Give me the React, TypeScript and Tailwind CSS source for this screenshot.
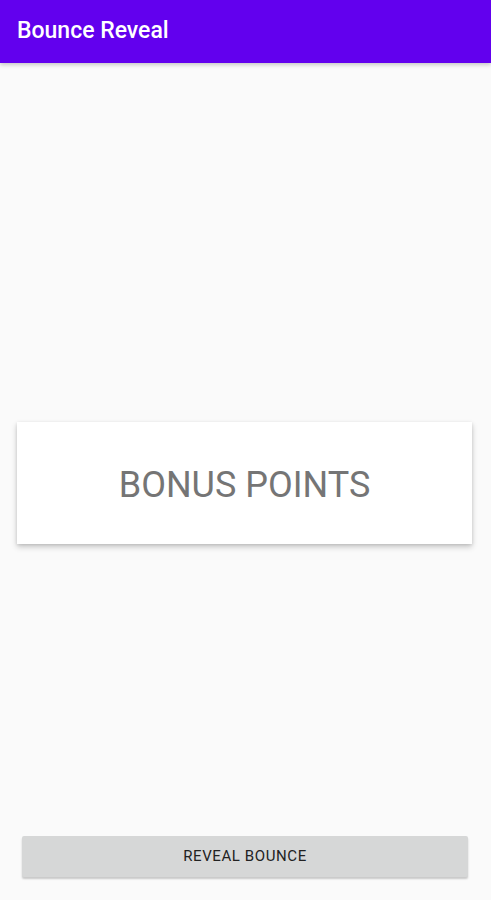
export default function App() {
  return (
    <div className="flex h-[900px] w-full flex-col bg-[#fafafa] font-['Roboto',sans-serif]">
      <header className="flex h-[63px] shrink-0 items-center bg-[#6200ee] px-[17px] shadow-[0_2px_4px_rgba(0,0,0,0.2)]">
        <h1 className="text-[23px] font-medium text-white">Bounce Reveal</h1>
      </header>
      <main className="grid flex-1">
        <div className="col-start-1 row-start-1 mt-[3px] self-center pl-[17px] pr-[19px]">
          <div className="flex h-[122px] items-center justify-center bg-white shadow-[0_3px_6px_rgba(0,0,0,0.2),0_1px_3px_rgba(0,0,0,0.1)]">
            <span className="mt-[3px] text-[36px] text-[#757575]">BONUS POINTS</span>
          </div>
        </div>
        <div className="col-start-1 row-start-1 self-end pb-[23px] pl-[22px] pr-[23px]">
          <button className="h-[41px] w-full rounded-[2px] bg-[#d6d7d7] text-[15px] tracking-[0.04em] text-[#222] shadow-[0_2px_2px_rgba(0,0,0,0.2)]">
            REVEAL BOUNCE
          </button>
        </div>
      </main>
    </div>
  );
}
